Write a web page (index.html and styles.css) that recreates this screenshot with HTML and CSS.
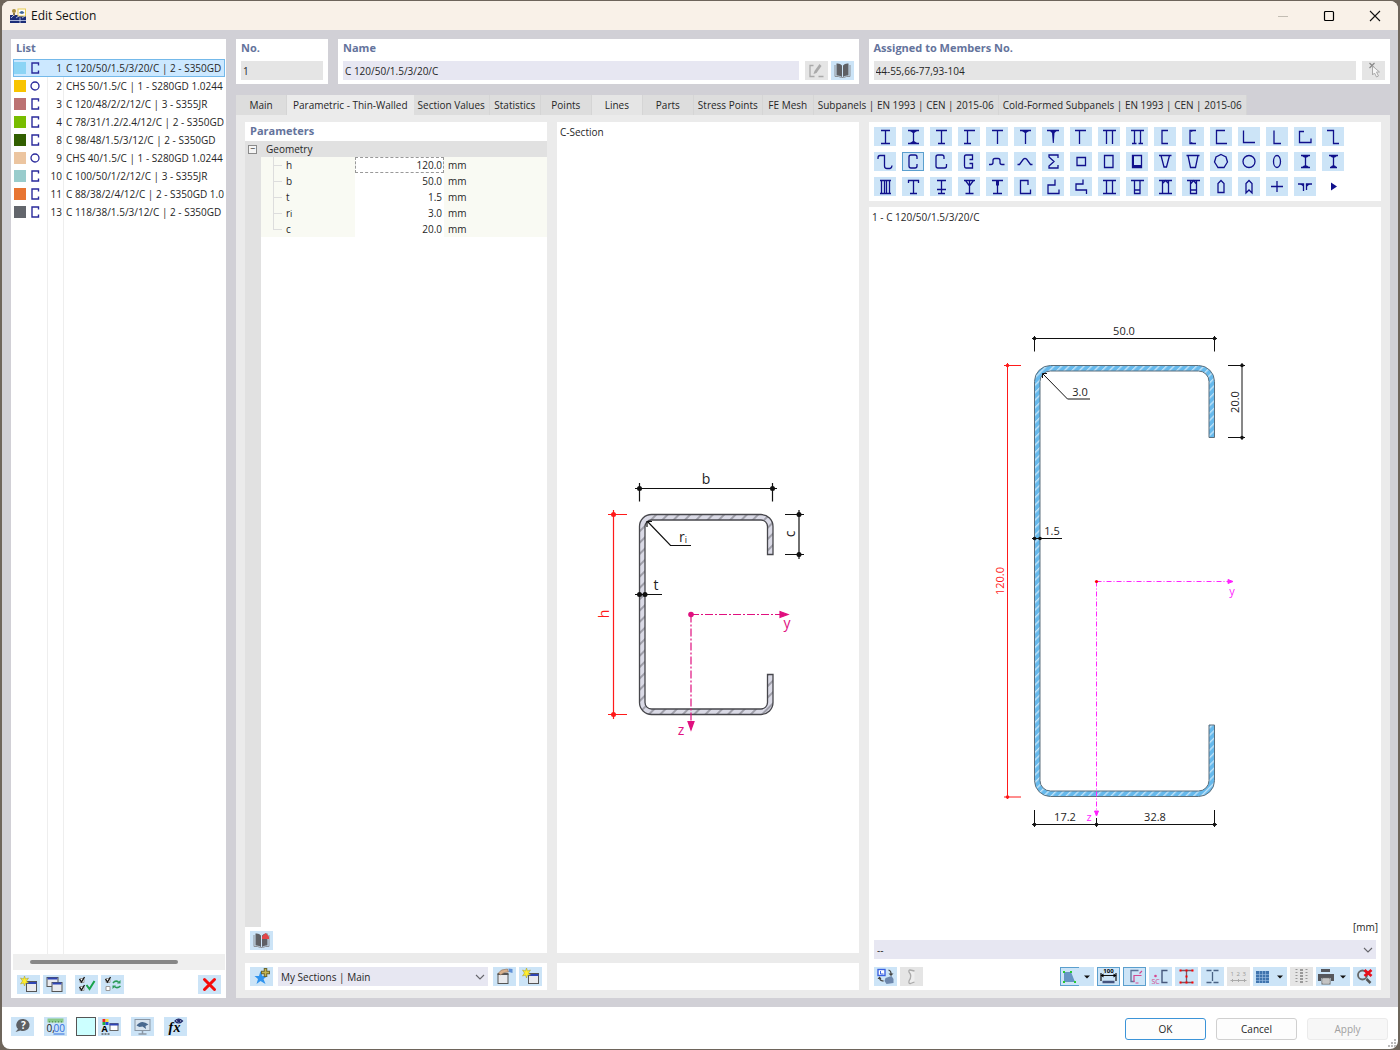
FILE: index.html
```
<!DOCTYPE html>
<html lang="en">
<head>
  <meta charset="UTF-8" />
  <meta name="viewport" content="width=device-width, initial-scale=1.0" />
  <title>Edit Section</title>
  <link rel="stylesheet" href="styles.css">
</head>
<body>
  <!-- shared icon shapes -->
  <svg class="defs" aria-hidden="true">
    <symbol id="c-shape" viewBox="0 0 10 12"><path d="M8.500 3.500V1H2V11H8.500V8.500" fill="none" stroke="#2a2a9c" stroke-width="1.400"/></symbol>
    <symbol id="o-shape" viewBox="0 0 10 12"><circle cx="5" cy="6" r="4" fill="none" stroke="#2a2a9c" stroke-width="1.3"/></symbol>
    <symbol id="new-window" viewBox="0 0 22 19">
      <rect x="9" y="6.5" width="10" height="10" fill="#e9eaee" stroke="#555"/>
      <path d="M9 8H19" stroke="#2f45b5" stroke-width="2"/>
      <path d="M7 1L8 4L11 3L9 6L11 8L8 8L7 11L6 8L3 9L5 6L3 3L6 4Z" fill="#ffee2e" stroke="#a79a1c" stroke-width=".5"/>
    </symbol>
    <symbol id="book" viewBox="0 0 22 19"><path d="M5 2.500Q8.500 2 10.500 4.500V16Q8.500 14 5 14.500ZM17 2.500Q13.500 2 11.500 4.500V16Q13.500 14 17 14.500Z" fill="#5f6064"/><path d="M3.500 4V15.500Q7 15 10 16.500H12Q15 15 18.500 15.500V4" fill="none" stroke="#8d9298"/></symbol>
    <symbol id="chevron" viewBox="0 0 10 6"><path d="M1 1L5 5L9 1" fill="none" stroke="#66666c" stroke-width="1.100"/></symbol>
  </svg>

  <div class="window">
    <header class="titlebar">
      <svg class="app-icon" viewBox="0 0 16 16"><rect y="7" width="16" height="8" fill="#1c2e78"/><rect x="8" y="1" width="7.500" height="7" fill="#fff" stroke="#e8cb50"/><path d="M9 5Q12 1 14.500 5L12 6Z" fill="#3f6799"/><circle cx="4" cy="3" r="2" fill="#a98d3b"/><path d="M3 5H5V8H3Z" fill="#8b7a50"/><path d="M0 12.500H16M1 10L4 7M6 10L9 8M10 9.500V15M12 10L15 8" stroke="#cdd6ee" stroke-width=".8"/></svg>
      <h1>Edit Section</h1>
      <button class="win-btn" aria-label="Minimize"><svg viewBox="0 0 12 12"><path d="M1 6.500H11" stroke="#c3bdb3"/></svg></button>
      <button class="win-btn" aria-label="Maximize"><svg viewBox="0 0 12 12"><rect x="1.500" y="1.500" width="9" height="9" rx="1" fill="none" stroke="#000" stroke-width="1.200"/></svg></button>
      <button class="win-btn" aria-label="Close"><svg viewBox="0 0 12 12"><path d="M1 1L11 11M11 1L1 11" stroke="#111" stroke-width="1.100"/></svg></button>
    </header>

    <main class="body">
      <section class="list panel">
        <h2>List</h2>
        <div class="list-rows">
          <table>
            <tr class="selected"><td><i class="swatch sky"></i><svg><use href="#c-shape"/></svg></td><td class="num">1</td><td>C 120/50/1.5/3/20/C | 2 - S350GD</td></tr>
            <tr><td><i class="swatch yellow"></i><svg><use href="#o-shape"/></svg></td><td class="num">2</td><td>CHS 50/1.5/C | 1 - S280GD 1.0244</td></tr>
            <tr><td><i class="swatch rose"></i><svg><use href="#c-shape"/></svg></td><td class="num">3</td><td>C 120/48/2/2/12/C | 3 - S355JR</td></tr>
            <tr><td><i class="swatch lime"></i><svg><use href="#c-shape"/></svg></td><td class="num">4</td><td>C 78/31/1.2/2.4/12/C | 2 - S350GD</td></tr>
            <tr><td><i class="swatch green"></i><svg><use href="#c-shape"/></svg></td><td class="num">8</td><td>C 98/48/1.5/3/12/C | 2 - S350GD</td></tr>
            <tr><td><i class="swatch peach"></i><svg><use href="#o-shape"/></svg></td><td class="num">9</td><td>CHS 40/1.5/C | 1 - S280GD 1.0244</td></tr>
            <tr><td><i class="swatch teal"></i><svg><use href="#c-shape"/></svg></td><td class="num">10</td><td>C 100/50/1/2/12/C | 3 - S355JR</td></tr>
            <tr><td><i class="swatch orange"></i><svg><use href="#c-shape"/></svg></td><td class="num">11</td><td>C 88/38/2/4/12/C | 2 - S350GD 1.0</td></tr>
            <tr><td><i class="swatch slate"></i><svg><use href="#c-shape"/></svg></td><td class="num">13</td><td>C 118/38/1.5/3/12/C | 2 - S350GD</td></tr>
          </table>
        </div>
        <div class="scrollbar"><div class="thumb"></div></div>
        <div class="list-tools">
          <button class="tool" aria-label="New"><svg viewBox="0 0 22 19"><use href="#new-window"/></svg></button>
          <button class="tool" aria-label="Copy"><svg viewBox="0 0 22 19"><rect x="3.500" y="2.500" width="11" height="9" fill="#e9eaee" stroke="#555"/><path d="M4 3.500H14" stroke="#2f45b5" stroke-width="2"/><rect x="8.500" y="7.500" width="10" height="9" fill="#e9eaee" stroke="#555"/><path d="M9 8.500H18" stroke="#2f45b5" stroke-width="2"/></svg></button>
          <button class="tool spaced" aria-label="Select used"><svg viewBox="0 0 22 19"><path d="M4.500 3.500H8.500V7.500H4.500ZM4.500 11.500H8.500V15.500H4.500Z" fill="#fff" stroke="#999"/><path d="M4 4L6 7L9 2M4 12L6 15L9 10" fill="none" stroke="#111" stroke-width="1.300"/><path d="M11 10L14 14L19 6" fill="none" stroke="#19a34a" stroke-width="2"/></svg></button>
          <button class="tool" aria-label="Invert selection"><svg viewBox="0 0 22 19"><path d="M4.500 3.500H8.500V7.500H4.500ZM4.500 11.500H8.500V15.500H4.500Z" fill="#fff" stroke="#999"/><path d="M4 4L6 7L9 2" fill="none" stroke="#111" stroke-width="1.300"/><path d="M11.500 8Q14 5 17 7M19 11Q15.500 14 13 11.500" fill="none" stroke="#2a9a57" stroke-width="1.600"/><path d="M19 5V8.500H15.500ZM11 10.500H14.500L11 14Z" fill="#2a9a57"/></svg></button>
          <button class="tool last" aria-label="Delete"><svg viewBox="0 0 22 19"><path d="M6 4.500L16 14.500M16 4.500L6 14.500" stroke="#f50a0a" stroke-width="3" stroke-linecap="round"/></svg></button>
        </div>
      </section>

      <section class="editor">
        <div class="fields">
          <div class="field panel">
            <label for="no">No.</label>
            <div class="field-row"><input id="no" class="muted" value="1" readonly></div>
          </div>
          <div class="field panel">
            <label for="name">Name</label>
            <div class="field-row">
              <input id="name" value="C 120/50/1.5/3/20/C">
              <button class="tool off" aria-label="Edit name"><svg viewBox="0 0 22 19"><path d="M8 4.500H4.500V15.500H9M13 15.500H18" fill="none" stroke="#aaa" stroke-width="1.300"/><path d="M8 13L9 10L14 3L16 5L11 12Z" fill="#aaa"/></svg></button>
              <button class="tool" aria-label="Section library"><svg viewBox="0 0 22 19"><use href="#book"/></svg></button>
            </div>
          </div>
          <div class="field panel">
            <label for="members">Assigned to Members No.</label>
            <div class="field-row">
              <input id="members" class="muted" value="44-55,66-77,93-104" readonly>
              <button class="tool off" aria-label="Select members"><svg viewBox="0 0 22 19"><path d="M7 2L12 7M12 2L7 7" stroke="#888" stroke-width="1.200"/><path d="M10 5V14L12 12L14 16L16 15L14 11H17Z" fill="#f6f6f6" stroke="#aaa"/></svg></button>
            </div>
          </div>
        </div>

        <nav class="tabs">
          <button>Main</button>
          <button class="active">Parametric - Thin-Walled</button>
          <button>Section Values</button>
          <button>Statistics</button>
          <button>Points</button>
          <button class="hover">Lines</button>
          <button>Parts</button>
          <button>Stress Points</button>
          <button>FE Mesh</button>
          <button>Subpanels | EN 1993 | CEN | 2015-06</button>
          <button>Cold-Formed Subpanels | EN 1993 | CEN | 2015-06</button>
        </nav>

        <div class="page">
          <div class="column">
            <div class="params panel">
              <h2>Parameters</h2>
              <div class="tree">
                <table>
                  <colgroup><col class="col-gutter"><col class="col-name"><col class="col-value"><col></colgroup>
                  <tr class="group"><td><button class="toggle" aria-label="Collapse">−</button></td><th colspan="3">Geometry</th></tr>
                  <tr><td></td><th><label for="p-h">h</label></th><td class="value focus"><input id="p-h" value="120.0"></td><td class="unit">mm</td></tr>
                  <tr><td></td><th><label for="p-b">b</label></th><td class="value"><input id="p-b" value="50.0"></td><td class="unit">mm</td></tr>
                  <tr><td></td><th><label for="p-t">t</label></th><td class="value"><input id="p-t" value="1.5"></td><td class="unit">mm</td></tr>
                  <tr><td></td><th><label for="p-r">r<small>i</small></label></th><td class="value"><input id="p-r" value="3.0"></td><td class="unit">mm</td></tr>
                  <tr class="end"><td></td><th><label for="p-c">c</label></th><td class="value"><input id="p-c" value="20.0"></td><td class="unit">mm</td></tr>
                </table>
              </div>
              <div class="params-tools">
                <button class="tool" aria-label="Load from library"><svg viewBox="0 0 22 19"><use href="#book"/><path d="M11.500 8V5.500L15 2L18.500 5.500V8Z" fill="#e2474b"/></svg></button>
              </div>
            </div>
            <div class="favorites panel">
              <button class="tool" aria-label="Add to my sections"><svg viewBox="0 0 22 19"><path d="M10 4L12 9H17L13 12L15 17L10 14L6 17L7.500 12L4 9H8.500Z" fill="#2f93ee"/><path d="M15 1V10M10.500 5.500H19.500" stroke="#6b652f" stroke-width="3.500"/><path d="M15 2V9M11.500 5.500H18.500" stroke="#c2b450" stroke-width="1.500"/></svg></button>
              <div class="combo">
                <select aria-label="My sections"><option>My Sections | Main</option></select>
                <svg><use href="#chevron"/></svg>
              </div>
              <button class="tool" aria-label="Manage"><svg viewBox="0 0 22 19"><rect x="4.500" y="6.500" width="10" height="10" fill="#e9eaee" stroke="#555"/><path d="M4 7.500H15" stroke="#555"/><path d="M5 6L8 3L14 2L15 5L11 5.500L7 8Z" fill="#d8b08c" stroke="#8a6a50" stroke-width=".6"/><path d="M15 1.500L19 2V6L15.500 5Z" fill="#5f8fd6"/></svg></button>
              <button class="tool" aria-label="New favorite"><svg viewBox="0 0 22 19"><use href="#new-window"/></svg></button>
            </div>
          </div>

          <div class="column">
            <div class="scheme panel">
              <p>C-Section</p>
              <svg class="drawing" width="230" height="290" viewBox="593 460 230 290">
                <defs>
                  <pattern id="hatch-grey" width="8" height="8" patternUnits="userSpaceOnUse" patternTransform="rotate(45)"><rect width="8" height="8" fill="#dadae6"/><path d="M4 0V8" stroke="#85858f" stroke-width="1.400"/></pattern>
                </defs>
                <path d="M773 554.500V526.500A12 12 0 0 0 761 514.500H651.500A12 12 0 0 0 639.500 526.500V702.500A12 12 0 0 0 651.500 714.500H761A12 12 0 0 0 773 702.500V674.500H767.500V702.500A6.500 6.500 0 0 1 761 709H651.500A6.500 6.500 0 0 1 645 702.500V526.500A6.500 6.500 0 0 1 651.500 520H761A6.500 6.500 0 0 1 767.500 526.500V554.500Z" fill="url(#hatch-grey)" stroke="#47474c" stroke-width="1.300"/>
                <g class="dim">
                  <path d="M635 488.500H777M639.500 483V501.500M772.500 483V501.500M785 514.500H804M785 554.500H804M799 510V559M635 594.500H662M648 522L670.500 545.500H691M647 527V521.500H652"/>
                  <g class="dots"><circle cx="639.500" cy="488.500" r="2.500"/><circle cx="772.500" cy="488.500" r="2.500"/><circle cx="799" cy="514.500" r="2.500"/><circle cx="799" cy="554.500" r="2.500"/><circle cx="639.500" cy="594.500" r="2.500"/><circle cx="645" cy="594.500" r="2.500"/></g>
                  <text x="706" y="484">b</text><text x="656" y="590">t</text>
                  <text x="683" y="542">r<tspan font-size="9" dy="1">i</tspan></text>
                  <text transform="translate(795 534) rotate(-90)">c</text>
                </g>
                <g class="dim red">
                  <path d="M613.500 510V719M608 514.500H627M608 714.500H627"/>
                  <g class="dots"><circle cx="613.500" cy="514.500" r="2.500"/><circle cx="613.500" cy="714.500" r="2.500"/></g>
                  <text transform="translate(609 614) rotate(-90)">h</text>
                </g>
                <g class="dim axis">
                  <path d="M691 614.500H780M691 614.500V722" stroke-dasharray="8 2 2 2"/>
                  <g class="dots"><circle cx="691" cy="614.500" r="2.800"/><path d="M780 611.500L788 614.500L780 617.500ZM688 721.500H694L691 730Z"/></g>
                  <text x="787" y="628">y</text><text x="681" y="735">z</text>
                </g>
              </svg>
            </div>
            <div class="blank panel"></div>
          </div>

          <div class="column">
            <div class="shapes panel" id="shapes"></div>
            <div class="preview panel">
              <p>1 - C 120/50/1.5/3/20/C</p>
              <svg class="drawing" width="280" height="515" viewBox="985 315 280 515">
                <defs>
                  <pattern id="hatch-blue" width="5.300" height="5.300" patternUnits="userSpaceOnUse" patternTransform="rotate(45)"><rect width="5.300" height="5.300" fill="#66b9ec"/><path d="M2.500 0V5.300" stroke="#d9effc" stroke-width="1.100"/></pattern>
                </defs>
                <path d="M1214.500 437.500V381.500A16 16 0 0 0 1198.500 365.500H1050.500A16 16 0 0 0 1034.500 381.500V780.500A16 16 0 0 0 1050.500 796.500H1198.500A16 16 0 0 0 1214.500 780.500V725H1209V780.500A10.500 10.500 0 0 1 1198.500 791H1050.500A10.500 10.500 0 0 1 1040 780.500V381.500A10.500 10.500 0 0 1 1050.500 371H1198.500A10.500 10.500 0 0 1 1209 381.500V437.500Z" fill="url(#hatch-blue)" stroke="#5c6f7c"/>
                <g class="dim small">
                  <path d="M1032 338.500H1217M1034.500 336V351.500M1214.500 336V351.500M1228 365.500H1245M1228 437.500H1245M1242 363V440M1032 538.500H1062M1043 374L1067.500 399H1090M1042.500 378V373.500H1047M1032 824.500H1217M1034.500 810V827M1096.500 818V827M1214.500 810V827"/>
                  <g class="dots"><circle cx="1034.500" cy="338.500" r="1.800"/><circle cx="1214.500" cy="338.500" r="1.800"/><circle cx="1242" cy="365.500" r="1.800"/><circle cx="1242" cy="437.500" r="1.800"/><circle cx="1034.500" cy="538.500" r="1.800"/><circle cx="1040" cy="538.500" r="1.800"/><circle cx="1034.500" cy="824.500" r="1.800"/><circle cx="1096.500" cy="824.500" r="1.800"/><circle cx="1214.500" cy="824.500" r="1.800"/></g>
                  <text x="1124" y="335">50.0</text><text x="1080" y="396">3.0</text><text x="1052" y="535">1.5</text>
                  <text x="1065" y="821">17.2</text><text x="1155" y="821">32.8</text>
                  <text transform="translate(1239 402) rotate(-90)">20.0</text>
                </g>
                <g class="dim small red">
                  <path d="M1007.500 363V799M1004 365.500H1021M1004 797H1021"/>
                  <g class="dots"><circle cx="1007.500" cy="365.500" r="1.800"/><circle cx="1007.500" cy="797" r="1.800"/></g>
                  <text transform="translate(1004 581) rotate(-90)">120.0</text>
                </g>
                <g class="dim small magenta">
                  <path d="M1096.500 581.500H1228M1096.500 581.500V812" stroke-dasharray="5 2 1 2"/>
                  <g class="dots"><path d="M1228 579.500L1233 581.500L1228 583.500ZM1094.500 811H1098.500L1096.500 816Z"/></g>
                  <text x="1232" y="595">y</text><text x="1089" y="821">z</text>
                </g>
                <circle cx="1096.500" cy="581.500" r="1.600" fill="#f00"/>
              </svg>
              <p class="units">[mm]</p>
              <div class="combo">
                <select aria-label="Result"><option>--</option></select>
                <svg><use href="#chevron"/></svg>
              </div>
              <div class="view-tools">
                <button class="tool" aria-label="Swap view"><svg viewBox="0 0 22 19"><rect x="3.500" y="2.500" width="7" height="6" fill="#fff" stroke="#3a62e0" stroke-width="1.400"/><path d="M6 4V7H9" stroke="#3a62e0" fill="none"/><path d="M14 3Q17 4 16.500 8M5 10Q5 14 9 14" fill="none" stroke="#444" stroke-width="1.300"/><path d="M14 6.500H19L16.500 9ZM3 12L5 9.500L7 12Z" fill="#444"/><path d="M11 11L17 9L19 12V16L12 17L10 14Z" fill="#6d87ad"/></svg></button>
                <button class="tool off" aria-label="Warping"><svg viewBox="0 0 22 19"><path d="M14 4L9.500 3Q8 3 8.500 5Q12 9 8.500 14Q8 17 10 16.500L14 15" fill="#eee" stroke="#aaa" stroke-width="1.300"/></svg></button>
                <button class="tool split first" aria-label="Display mode"><svg viewBox="0 0 34 19"><path d="M0.500 .5H19M.5 0V18.500M0 18.500H19" fill="none" stroke="#5b9fce"/><path d="M4 5H11L15 15H4Z" fill="#6595c2"/><path d="M3 4H5V6H3ZM10 4H12V6H10ZM3 14H5V16H3ZM14 14H16V16H14Z" fill="#28c934"/><path d="M24 8.500H30L27 11.500Z" fill="#111"/></svg></button>
                <button class="tool on" aria-label="Dimensions"><svg viewBox="0 0 22 19"><path d="M3.500 6V14M18.500 6V14M3 8.500H19" stroke="#111" stroke-width="1.200"/><path d="M3 8.500L6 6.500V10.500ZM19 8.500L16 6.500V10.500Z"/><path d="M5 15H17" stroke="#44547e" stroke-width="2.500"/><text x="11" y="6" font-size="6" font-weight="700" text-anchor="middle">100</text></svg></button>
                <button class="tool on" aria-label="Principal axes"><svg viewBox="0 0 22 19"><path d="M15 3.500H7.500V14.500H11" fill="none" stroke="#5b7196" stroke-width="1.300"/><path d="M10 8.500H18M10.500 8V15M16 6.500L18.500 4M12 16H15" fill="none" stroke="#d5478f" stroke-width="1.200"/></svg></button>
                <button class="tool" aria-label="Shear center"><svg viewBox="0 0 22 19"><path d="M18 3.500H12.500V15.500H18" fill="none" stroke="#47597c" stroke-width="1.400"/><circle cx="6" cy="9" r="1.300" fill="#d5478f"/><text x="2" y="17" font-size="7" fill="#d5478f">SC</text></svg></button>
                <button class="tool" aria-label="Stress points"><svg viewBox="0 0 22 19"><path d="M5 3.500H17M11 3.500V15.500M5 15.500H17" stroke="#7b5664" stroke-width="1.300"/><path d="M4 2.500H6V4.500H4ZM10 2.500H12V4.500H10ZM16 2.500H18V4.500H16ZM10 8.500H12V10.500H10ZM4 14.500H6V16.500H4ZM10 14.500H12V16.500H10ZM16 14.500H18V16.500H16Z" fill="#f00"/></svg></button>
                <button class="tool" aria-label="Parts"><svg viewBox="0 0 22 19"><path d="M5 3.500H10M12 3.500H17M11 5V14M5 15.500H10M12 15.500H17" stroke="#4a6283" stroke-width="1.300"/></svg></button>
                <button class="tool off" aria-label="Numbering"><svg viewBox="0 0 22 19"><path d="M3 13.500H19M5 12V15M11 12V15M17 12V15" stroke="#aaa"/><text x="3" y="9" font-size="6" fill="#999">1</text><text x="9" y="9" font-size="6" fill="#999">2</text><text x="15" y="9" font-size="6" fill="#999">3</text></svg></button>
                <button class="tool split" aria-label="Grid"><svg viewBox="0 0 34 19"><rect x="3" y="4" width="13" height="12" fill="#3f74ae"/><path d="M3 7.500H16M3 10.500H16M3 13.500H16M6.500 4V16M9.500 4V16M12.500 4V16" stroke="#9dc0e4" stroke-width=".6"/><path d="M24 8.500H30L27 11.500Z" fill="#111"/></svg></button>
                <button class="tool off" aria-label="Table"><svg viewBox="0 0 22 19"><path d="M11 2V17" stroke="#999" stroke-width="3" stroke-dasharray="2 1"/><path d="M6 2V17M16 2V17" stroke="#999" stroke-width="2" stroke-dasharray="1 2"/></svg></button>
                <button class="tool split" aria-label="Print"><svg viewBox="0 0 34 19"><path d="M5 2H14V5H5ZM2 7H18V14H15V11H5V14H2Z" fill="#55565b"/><rect x="6" y="11" width="8" height="6" fill="#fff" stroke="#666"/><path d="M7 13H13M7 15H13" stroke="#888"/><path d="M24 8.500H30L27 11.500Z" fill="#111"/></svg></button>
                <button class="tool" aria-label="Reset zoom"><svg viewBox="0 0 22 19"><circle cx="9" cy="8" r="4.500" fill="none" stroke="#666" stroke-width="1.800"/><path d="M13 12L17 16" stroke="#555" stroke-width="2.500"/><path d="M11 3L18 9M18 3L11 9" stroke="#e80f1c" stroke-width="2.800"/></svg></button>
              </div>
            </div>
          </div>
        </div>
      </section>
    </main>

    <footer class="footer">
      <button class="tool" aria-label="Help"><svg viewBox="0 0 22 19"><path d="M12 2A6.500 6 0 1 1 9 13.500L4 15L6.500 12A6.500 6 0 0 1 12 2Z" fill="#5d6064"/><text x="12" y="12" font-size="10" font-weight="700" fill="#fff" text-anchor="middle">?</text></svg></button>
      <button class="tool" aria-label="Units"><svg viewBox="0 0 22 19"><rect x="3" y="1.500" width="16" height="4" fill="#8ac98a"/><path d="M5 4V5.500M8 4V5.500M11 4V5.500M14 4V5.500M17 4V5.500" stroke="#4a854a" stroke-width=".7"/><text x="2" y="15" font-size="10" fill="#222">0,</text><text x="9" y="15" font-size="10" fill="#2f6ddd">00</text><path d="M9 17H20" stroke="#2f6ddd"/></svg></button>
      <button class="color" aria-label="Color"></button>
      <button class="tool" aria-label="Display properties"><svg viewBox="0 0 22 19"><path d="M4 2H7V5H4Z" fill="#e22"/><path d="M7 2H10V5H7Z" fill="#fd3"/><path d="M4 5H7V8H4Z" fill="#2a4"/><path d="M7 5H10V8H7Z" fill="#24d"/><text x="3" y="15" font-size="9" font-weight="700">A</text><path d="M3 17H11" stroke="#222" stroke-dasharray="2 1"/><rect x="11.500" y="6.500" width="8" height="7" fill="#fff" stroke="#666"/><path d="M11 7.500H20" stroke="#2f45b5" stroke-width="2"/></svg></button>
      <button class="tool" aria-label="View"><svg viewBox="0 0 22 19"><rect x="3.500" y="2.500" width="15" height="11" fill="#d8e4ef" stroke="#8a97a5"/><path d="M5 8.500Q10 2 17 7.500L14 9L14.500 12L11 9.500L8 10Z" fill="#49698f"/><path d="M11 14V17M7 17H15" stroke="#8a97a5" stroke-width="1.500"/></svg></button>
      <button class="tool" aria-label="Formula"><svg viewBox="0 0 22 19"><text x="4" y="15" class="fx">f</text><text x="9" y="15" class="fx">x</text><path d="M10.500 4Q14 0 18 4Q14 8 10.500 4Z" fill="#fff" stroke="#1f2a6b" stroke-width="1.200"/><circle cx="14.300" cy="3.800" r="1.800" fill="#1f2a6b"/></svg></button>
      <div class="actions">
        <button class="ok">OK</button>
        <button>Cancel</button>
        <button disabled>Apply</button>
      </div>
      <svg class="grip" viewBox="0 0 8 8"><path d="M6 0H8V2H6ZM3 3H5V5H3ZM6 3H8V5H6ZM0 6H2V8H0ZM3 6H5V8H3ZM6 6H8V8H6Z" fill="#bbb"/></svg>
    </footer>
  </div>

  <script>
    // [line path, filled path] per section type, on a 22 x 19 grid
    const shapes = [
      ["M7 3.5H16M11.5 3.5V16.5M7 16.5H16"],
      ["M6 3.5H17M11.5 3.5V16.5M6 16.5H17", "M8 4H15L12 6H11ZM8 16H15L12 14H11Z"],
      ["M6 3.5H17M11.5 3.5V16.5M8 16.5H15"],
      ["M6 3.5H17M9.5 3.5V16.5M6 16.5H13"],
      ["M6 3.5H17M11.5 3.5V17"],
      ["M6 3.5H17M11.5 3.5V17", "M8 4H15L12 6H11Z"],
      ["M5 3.5H17", "M8 4H14.500L12.500 6L11.800 16H10.800L10 6Z"],
      ["M5 3.5H16M9.500 3.5V17"],
      ["M5 3.5H18M8.5 3.5V17M14.5 3.5V17"],
      ["M5 3.5H18M8.5 3.5V16.5M14.5 3.5V16.5M6 16.5H10.5M12.5 16.5H17"],
      ["M14 3.5H8V16.5H14"],
      ["M14 3.5H8V16.5H14", "M8 3H13L9 5ZM8 17H13L9 15Z"],
      ["M15 3.5H6.5V16.5H17"],
      ["M5.5 3.5V15.5H17"],
      ["M8 3.5V16.5H15"],
      ["M10 4.5H5.5V15.500H17V11.5"],
      ["M5 3.5H11.500V16.5H17"],
      ["M4 7V6Q4 3.500 6 3.500H10.500V14Q10.500 16.500 13 16.500H16Q18 16 18 13.500"],
      ["M15 7V5Q15 3 13 3H9Q7 3 7 5V14Q7 16 9 16H13Q15 16 15 14V12"],
      ["M14 7V5Q14 3 12 3H8Q6 3 6 5V14Q6 16 8 16H14.500Q16.500 16 16.500 14V12"],
      ["M11.500 7.500H14.500V3H8Q6.500 3 6.500 5V14Q6.500 16 8 16H14.500V11.500H11.500"],
      ["M3 12.5H5Q7 12.5 7 10.5V8.5Q7 6.5 9 6.5H12Q14 6.5 14 8.5V10.5Q14 12.5 16 12.5H18.500"],
      ["M3.5 12.5H5.500L9.500 7Q11 6 12.500 7L16.500 12.5H18.5"],
      ["M16 6V3H7V5L12 9.500L7 14V16H16V13"],
      ["M7 5.500H15.500V13.500H7Z"],
      ["M6.500 3.500H15V15.500H6.500Z"],
      ["M6.500 3.500H15.500V15.500H6.500Z", "M6 13H16V16H6ZM6 3H8V16H6Z"],
      ["M5 3.5H17.500M7 3.5L10 15H12.500L15.500 3.5"],
      ["M4.500 3.5H17.500M6 3.500L8.500 15.5H13.500L16 3.5"],
      ["M11 2.500L16 5L17.500 10L14 15.500H8L4.500 10L6 5Z"],
      ["M5 9.500A6 6 0 1 1 17 9.500A6 6 0 1 1 5 9.500Z"],
      ["M7.500 9.500A3.500 6 0 1 1 14.500 9.500A3.500 6 0 1 1 7.500 9.500Z"],
      ["M7 3.500H16M11.500 3V16M7 15.500H16", "M7 3H16L13 5.500H10ZM7 16H16L13 13.500H10Z"],
      ["M7 3.500H16M11.500 3V16M8 15.500H15", "M7 3H16L13 5.500H10ZM8 16H15L13 13.500H10Z"],
      ["M6 3.500H17M6 16.500H17M7.500 3.500V16.500M15.500 3.500V16.500M10.500 3.500V16.500M12.500 3.500V16.500"],
      ["M6.500 6V3.500H16.500V6M11.500 3.500V16.500M8 16.500H15"],
      ["M7 3.500H16M11.500 3.500V16.500M7 12.500H16M8 16.500H15"],
      ["M6 3.500H17M11.500 3.500V16.500M7.500 16.500H15.500M7.500 3.500L11.500 9L15.500 3.500"],
      ["M6 3.500H17M11.500 3.500V16.500M7 16.500H16", "M10 3H13V8L12 9H11L10 8Z"],
      ["M14 8V3.500H6.500V16.500H16.500V12.500"],
      ["M13 2.500V8H6V16.500H17V12.500"],
      ["M13 2.500V7H6V13H16.500V17"],
      ["M5 3.500H18M5 16.500H18M8.500 3.500V16.500M14.500 3.500V16.500"],
      ["M5 3.500H18M8.500 3.500V16.500H14V3.500M8.500 13H14"],
      ["M5 3.500H18M5 16.500H18M8.500 3.500V16.500M14.500 3.500V16.500M8.500 6.500L11.500 3.500L14.500 6.500"],
      ["M5 3.500H18M8.500 3.500V16.500H14.500V3.500M8.500 7L11.500 3.500L14.500 7M8.500 13H14"],
      ["M8 15.500V6.500L11 3.500L14 6.500V15.500Z"],
      ["M8 16V6.500L11 3.500L14 6.500V16L11 13Z"],
      ["M5 9.500H17M11 4V15"],
      ["M4 7H9.500V14M18 7H12.500V13", "M6 7H10V10ZM16 7H12.500V10Z"],
      ["", "M9 5.500L15 9.500L9 13.500Z"]
    ];

    document.getElementById("shapes").innerHTML = shapes.map((s, i) => {
      let cls = "tool";
      if (i === 18) cls += " on";
      if (i === shapes.length - 1) cls += " more";
      const fill = s[1] ? `<path class="solid" d="${s[1]}"/>` : "";
      return `<button class="${cls}" aria-label="Section type ${i + 1}"><svg viewBox="0 0 22 19"><path class="line" d="${s[0]}"/>${fill}</svg></button>`;
    }).join("");
  </script>
</body>
</html>
```
FILE: styles.css
```
* {
  box-sizing: border-box;
}
body {
  margin: 0;
  padding: 1px 2px;
  height: 100vh;
  background: #6e655b;
  color: #262626;
  font-family: "Open Sans", "Noto Sans", sans-serif;
  font-size: 10px;
  line-height: 16px;
}
button, input, select {
  font: inherit;
  color: inherit;
  border: none;
  border-radius: 0;
  padding: 0;
  margin: 0;
}
h2, p {
  margin: 0;
}
svg {
  display: block;
}
table {
  border-collapse: collapse;
  table-layout: fixed;
  width: 100%;
}
td, th {
  padding: 0;
  font-weight: normal;
  text-align: left;
  white-space: nowrap;
}
.defs {
  position: absolute;
  width: 0;
  height: 0;
}
.window {
  display: flex;
  flex-direction: column;
  height: 100%;
  background: #fff;
  border-radius: 8px;
  overflow: hidden;
}
.titlebar {
  display: flex;
  align-items: center;
  height: 29px;
  padding-left: 8px;
  background: #f9f1e8;
}
.app-icon {
  width: 16px;
  height: 16px;
  margin-right: 5px;
}
.titlebar h1 {
  flex: 1;
  margin: 0;
  font-size: 12px;
  font-weight: normal;
  color: #111;
}
.win-btn {
  width: 46px;
  height: 29px;
  background: none;
}
.win-btn svg {
  width: 12px;
  height: 12px;
  margin: auto;
}
.body {
  flex: 1;
  display: flex;
  gap: 10px;
  min-height: 0;
  padding: 9px 8px 9px 9px;
  background: #d1d0d6;
}
.panel {
  background: #fff;
}
.panel h2, .field label {
  font-size: 11px;
  font-weight: 700;
  color: #64739c;
}

/* list */
.list {
  flex: 0 0 215px;
  display: flex;
  flex-direction: column;
  padding: 1px 1px 4px 2px;
}
.list h2 {
  height: 19px;
  padding-left: 3px;
}
.list-rows {
  flex: 1;
  overflow: hidden;
  background: linear-gradient(#eee, #eee) 34px 0 / 1px 100% no-repeat, linear-gradient(#eee, #eee) 50px 0 / 1px 100% no-repeat;
}
.list-rows tr {
  height: 18px;
}
.list-rows tr.selected {
  background: #cce8ff;
  outline: 1px solid #74b9ea;
  outline-offset: -1px;
}
.list-rows td:first-child {
  width: 32px;
}
.list-rows td:first-child svg {
  display: inline-block;
  width: 10px;
  height: 12px;
  margin: 2px 0 0 4px;
  vertical-align: top;
}
.list-rows .num {
  width: 21px;
  padding-right: 4px;
  text-align: right;
}
.swatch {
  display: inline-block;
  width: 12px;
  height: 12px;
  margin: 2px 0 0 1px;
  vertical-align: top;
}
.sky { background: #8cd4f5; }
.yellow { background: #f8c400; }
.rose { background: #bc7272; }
.lime { background: #78bd00; }
.green { background: #325f00; }
.peach { background: #ecc5a0; }
.teal { background: #99cccc; }
.orange { background: #e87532; }
.slate { background: #63666c; }
.scrollbar {
  height: 16px;
  padding: 6px 47px 0 17px;
  background: #efefef;
}
.thumb {
  height: 4px;
  border-radius: 2px;
  background: #878787;
}
.list-tools {
  display: flex;
  gap: 3px;
  padding: 5px 4px 0;
}
.spaced {
  margin-left: 6px;
}
.last {
  margin-left: auto;
}

/* icon buttons */
.tool {
  flex: none;
  width: 23px;
  height: 19px;
  background: #cce4f7;
}
.tool svg {
  width: 100%;
  height: 19px;
}
.tool.off {
  background: #e5e5e5;
}
.tool.on {
  outline: 1px solid #5b9fce;
  outline-offset: -1px;
}
.tool.split {
  width: 34px;
}

/* editor */
.editor {
  flex: 1;
  display: flex;
  flex-direction: column;
  min-width: 0;
}
.fields {
  display: grid;
  grid-template-columns: 92px 521fr 522fr;
  gap: 10px;
  height: 45px;
}
.field {
  padding: 1px 5px 4px;
}
.field label {
  display: block;
  height: 21px;
}
.field-row {
  display: flex;
  gap: 3px;
}
.field-row input {
  flex: 1;
  min-width: 0;
  height: 19px;
  padding: 1px 2px 0;
  background: #e7e7f2;
}
.field-row input.muted {
  background: #e5e5e5;
}
.field-row input + .tool {
  margin-left: 3px;
}
.tabs {
  display: flex;
  height: 20px;
  margin-top: 11px;
}
.tabs button {
  min-width: 51px;
  padding: 0 4px;
  background: #dddddd;
  border-right: 1px solid #d5d5d5;
  white-space: nowrap;
}
.tabs .active {
  padding: 0 6px;
  background: #ebebeb;
  border: none;
}
.tabs .hover {
  background: #e5e5e5;
}
.page {
  flex: 1;
  display: grid;
  grid-template-columns: 302fr 302fr 512fr;
  gap: 10px;
  min-height: 0;
  padding: 7px 9px 8px;
  background: #ebebeb;
}
.column {
  display: flex;
  flex-direction: column;
  gap: 10px;
  min-width: 0;
}
.params, .scheme, .preview {
  flex: 1;
  display: flex;
  flex-direction: column;
  min-height: 0;
}
.params h2 {
  height: 19px;
  padding: 1px 5px 0;
}
.tree {
  flex: 1;
  background: linear-gradient(#e1e1e1, #e1e1e1) 0 0 / 16px 100% no-repeat;
}
.tree tr {
  height: 16px;
}
.tree .group {
  background: #e1e1e1;
}
.tree .group th {
  padding-left: 5px;
  background: none;
}
.col-gutter {
  width: 16px;
}
.col-name {
  width: 94px;
}
.col-value {
  width: 89px;
}
.tree th {
  padding-left: 25px;
  background: linear-gradient(#ddd, #ddd) 12px 0 / 1px 100% no-repeat, linear-gradient(#ddd, #ddd) 12px 8px / 9px 1px no-repeat, #f9faf3;
}
.tree .end th {
  background: linear-gradient(#ddd, #ddd) 12px 0 / 1px 8px no-repeat, linear-gradient(#ddd, #ddd) 12px 8px / 9px 1px no-repeat, #f9faf3;
}
.tree small {
  font-size: 9px;
  line-height: 1;
}
.value input {
  display: block;
  width: 100%;
  height: 16px;
  padding-right: 2px;
  text-align: right;
  background: #fff;
}
.value.focus input {
  outline: 1px dashed #999;
  outline-offset: -1px;
}
.tree .unit {
  padding-left: 4px;
  background: #f9faf3;
}
.toggle {
  display: block;
  width: 9px;
  height: 9px;
  margin-left: 3px;
  border: 1px solid #8a8a8a;
  background: #f4f4f4;
  font-size: 9px;
  line-height: 6px;
}
.params-tools {
  display: flex;
  padding: 4px 5px 3px;
}
.favorites {
  display: flex;
  gap: 3px;
  height: 27px;
  padding: 4px 5px;
}
.combo {
  flex: 1;
  position: relative;
}
.combo select {
  display: block;
  appearance: none;
  width: 100%;
  height: 19px;
  padding: 0 3px;
  background: #e7e7f2;
}
.combo svg {
  position: absolute;
  right: 3px;
  top: 7px;
  width: 10px;
  height: 6px;
  pointer-events: none;
}
.favorites .combo {
  margin: 0 2px;
}
.blank {
  height: 27px;
}
.scheme p, .preview p {
  padding: 2px 3px;
}
.drawing {
  margin: auto;
}
.scheme .drawing {
  margin-top: 318px;
}
.dim path {
  fill: none;
  stroke: #111;
  stroke-width: 1.2px;
}
.dim .dots {
  fill: #111;
}
.dim text {
  fill: #222;
  font-size: 14px;
  text-anchor: middle;
}
.dim.small path {
  stroke-width: 1px;
}
.dim.small text {
  font-size: 11px;
}
.dim.red path { stroke: #ff1a1a; }
.dim.red .dots, .dim.red text { fill: #ff1a1a; }
.dim.axis path { stroke: #e0107f; }
.dim.axis .dots, .dim.axis text { fill: #e0107f; }
.dim.magenta path { stroke: #ff22ff; }
.dim.magenta .dots, .dim.magenta text { fill: #ff22ff; }
.dim .dots path { fill: inherit; }

/* section types */
.shapes {
  display: grid;
  grid-template-columns: repeat(17, 22px);
  gap: 6px;
  height: 79px;
  margin-bottom: -4px;
  padding: 5px;
}
.shapes .tool {
  width: 22px;
}
.shapes .more {
  background: none;
}
.line {
  fill: none;
  stroke: #10108c;
  stroke-width: 1.3px;
}
.solid {
  fill: #10108c;
}
.units {
  text-align: right;
}
.preview .combo {
  flex: none;
  margin: 3px 5px 0;
}
.view-tools {
  display: flex;
  gap: 3px;
  padding: 8px 5px 4px;
}
.first {
  margin-left: auto;
}

/* footer */
.footer {
  position: relative;
  display: flex;
  align-items: center;
  gap: 10px;
  height: 42px;
  padding: 0 10px 4px 9px;
}
.color {
  width: 20px;
  height: 19px;
  margin: 0 -8px 0 -1px;
  border: 1px solid #555;
  background: #ccffff;
}
.fx {
  font: italic 700 14px "Liberation Serif", serif;
}
.actions {
  display: flex;
  gap: 10px;
  margin-left: auto;
  padding-top: 5px;
}
.actions button {
  width: 81px;
  height: 22px;
  border: 1px solid #d0d0d0;
  border-radius: 3px;
  background: #fdfdfd;
}
.actions .ok {
  border-color: #3c94d8;
}
.actions button:disabled {
  border-color: #ebebeb;
  background: #f7f7f7;
  color: #a0a0a0;
}
.grip {
  position: absolute;
  right: 2px;
  bottom: 2px;
  width: 8px;
  height: 8px;
}
```
